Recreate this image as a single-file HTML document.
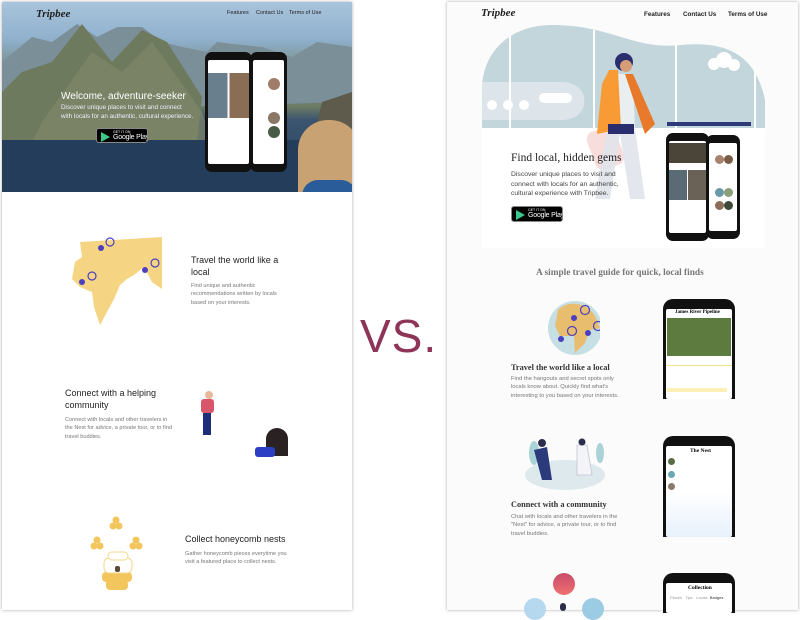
<!DOCTYPE html>
<html><head><meta charset="utf-8"><style>
*{margin:0;padding:0;box-sizing:border-box}
body{width:800px;height:612px;background:#fff;position:relative;overflow:hidden;font-family:"Liberation Sans",sans-serif}
.a{position:absolute}
.panel{box-shadow:0 0 3px rgba(0,0,0,.35)}
.ph{position:absolute;background:#111;border-radius:7px}
.ph i{position:absolute;left:3px;right:3px;top:8px;bottom:8px;background:#fff;border-radius:2px}
.gp{position:absolute;background:#000;border-radius:3px;border:1px solid #888;color:#fff;white-space:nowrap;overflow:hidden}
.gp b{position:absolute;left:4px;top:3px;width:0;height:0;border-left:9px solid #3bc88a;border-top:5px solid transparent;border-bottom:5px solid transparent}
.gp span{position:absolute;left:16px;top:1px;font-size:3.5px}
.gp em{position:absolute;left:16px;top:5px;font-size:7px;font-style:normal;letter-spacing:-.2px}
.serif{font-family:"Liberation Serif",serif}
.g{color:#777}
</style></head><body>

<!-- LEFT PANEL -->
<div class="a panel" style="left:2px;top:2px;width:350px;height:608px;background:#fff"></div>
<div class="a" style="left:2px;top:2px;width:350px;height:190px;overflow:hidden;background:linear-gradient(#a9c4dc 0%,#8fb0cc 20%,#7a8e86 35%,#6c7b64 55%,#3b5470 62%,#25405e 100%)">
 <svg class="a" style="left:0;top:0" width="350" height="190"><polygon points="0,60 30,35 50,40 75,22 95,35 115,25 140,25 160,40 180,45 205,50 215,40 230,42 260,45 290,55 315,40 350,45 350,100 0,110" fill="#7b8f99"/><polygon points="0,90 20,70 50,60 80,22 110,60 140,28 165,40 200,95 195,140 0,140" fill="#6e7a5e"/><polygon points="40,120 90,50 120,70 150,40 200,110 210,140 30,140" fill="#80886a" opacity=".7"/><rect y="138" width="350" height="52" fill="#233d5b"/><polygon points="320,100 350,90 350,190 300,190" fill="#5e5a4c"/></svg>
 <div class="a" style="left:296px;top:118px;width:62px;height:80px;border-radius:30px 30px 0 0;background:#c9a273"></div>
 <div class="a" style="left:300px;top:178px;width:55px;height:20px;border-radius:16px 16px 0 0;background:#2a5c9a"></div>
</div>
<div class="a" style="left:36px;top:8px;font:italic bold 11px 'Liberation Serif',serif;color:#222">Tripbee</div>
<div class="a" style="left:227px;top:10px;font-size:5.5px;color:#222">Features</div>
<div class="a" style="left:256px;top:10px;font-size:5.5px;color:#222">Contact Us</div>
<div class="a" style="left:289px;top:10px;font-size:5.5px;color:#222">Terms of Use</div>
<div class="a" style="left:61px;top:91px;font-size:10px;color:#fff">Welcome, adventure-seeker</div>
<div class="a" style="left:61px;top:104px;font-size:6.3px;line-height:8.5px;color:#eef">Discover unique places to visit and connect<br>with locals for an authentic, cultural experience.</div>
<div class="gp" style="left:96px;top:128px;width:52px;height:15px"><b></b><span>GET IT ON</span><em>Google Play</em></div>
<div class="ph" style="left:205px;top:52px;width:47px;height:120px"><i></i></div>
<div class="ph" style="left:250px;top:52px;width:37px;height:120px"><i></i></div>
<div class="a" style="left:208px;top:73px;width:41px;height:45px;background:linear-gradient(90deg,#6a7f8e 48%,#fff 48%,#fff 52%,#8a6d55 52%)"></div>
<div class="a" style="left:268px;top:78px;width:12px;height:12px;border-radius:50%;background:#a07d6a"></div>
<div class="a" style="left:268px;top:112px;width:12px;height:12px;border-radius:50%;background:#8a7766"></div>
<div class="a" style="left:268px;top:126px;width:12px;height:12px;border-radius:50%;background:#4a5a48"></div>

<svg class="a" style="left:72px;top:237px" width="92" height="88"><path d="M8,5 L90,0 L90,52 L80,45 L72,30 L62,38 L55,42 L48,48 L42,62 L35,75 L28,88 L22,70 L20,55 L8,50 L0,42 L3,25 L10,20 Z" fill="#f5d583"/><g fill="#4a3fbf"><circle cx="29" cy="11" r="3"/><circle cx="10" cy="45" r="3"/><circle cx="73" cy="33" r="3"/></g><g fill="none" stroke="#4a3fbf" stroke-width="1.2"><circle cx="38" cy="5" r="4"/><circle cx="20" cy="39" r="4"/><circle cx="83" cy="26" r="4"/></g></svg>
<div class="a" style="left:191px;top:254px;font-size:9px;line-height:12px;color:#222;width:100px">Travel the world like a local</div>
<div class="a g" style="left:191px;top:282px;font-size:5.6px;line-height:8.3px;width:100px">Find unique and authentic recommendations written by locals based on your interests.</div>

<div class="a" style="left:65px;top:387px;font-size:9px;line-height:12px;color:#222">Connect with a helping<br>community</div>
<div class="a g" style="left:65px;top:416px;font-size:5.6px;line-height:8.3px;width:110px">Connect with locals and other travelers in the Nest for advice, a private tour, or to find travel buddies.</div>
<div class="a" style="left:205px;top:391px;width:8px;height:8px;border-radius:50%;background:#e8b99a"></div>
<div class="a" style="left:201px;top:399px;width:13px;height:14px;background:#d9556a;border-radius:3px"></div>
<div class="a" style="left:203px;top:413px;width:8px;height:22px;background:#1d2d7a"></div>
<div class="a" style="left:266px;top:428px;width:22px;height:28px;border-radius:11px 11px 0 0;background:#2a2222"></div>
<div class="a" style="left:255px;top:447px;width:20px;height:10px;background:#2c3fc4;border-radius:3px"></div>

<svg class="a" style="left:90px;top:516px" width="55" height="76"><g fill="#f2c65c"><circle cx="26" cy="4" r="3.5"/><circle cx="23" cy="10" r="3.5"/><circle cx="29" cy="10" r="3.5"/><circle cx="7" cy="24" r="3.5"/><circle cx="4" cy="30" r="3.5"/><circle cx="10" cy="30" r="3.5"/><circle cx="46" cy="24" r="3.5"/><circle cx="43" cy="30" r="3.5"/><circle cx="49" cy="30" r="3.5"/><rect x="12" y="56" width="30" height="10" rx="4"/><rect x="16" y="64" width="22" height="10" rx="4"/></g><rect x="14" y="42" width="28" height="15" rx="5" fill="#fff" stroke="#f2d78c"/><rect x="18" y="36" width="20" height="8" rx="4" fill="#fff" stroke="#f2d78c"/><rect x="25" y="50" width="5" height="6" rx="2" fill="#5a4a3a"/></svg>
<div class="a" style="left:185px;top:534px;font-size:9px;color:#222">Collect honeycomb nests</div>
<div class="a g" style="left:185px;top:550px;font-size:5.6px;line-height:8.3px">Gather honeycomb pieces everytime you<br>visit a featured place to collect nests.</div>

<!-- VS -->
<div class="a" style="left:360px;top:309px;font-size:46px;color:#8e3457;letter-spacing:1px">VS.</div>

<!-- RIGHT PANEL -->
<div class="a panel" style="left:447px;top:2px;width:351px;height:608px;background:#fbfbfb"></div>
<div class="a" style="left:482px;top:128px;width:283px;height:120px;background:#fff"></div>
<svg class="a" style="left:482px;top:20px" width="284" height="110"><path d="M0,108 L0,70 C0,30 30,5 70,5 C130,5 150,30 200,25 C250,20 275,40 283,80 L283,108 Z" fill="#c3d6dc"/><path d="M0,62 L80,62 C110,62 110,100 80,100 L0,100Z" fill="#dde4ea"/><g fill="#fff"><circle cx="10" cy="85" r="5"/><circle cx="26" cy="85" r="5"/><circle cx="42" cy="85" r="5"/><rect x="57" y="73" width="33" height="10" rx="5"/><circle cx="232" cy="44" r="6"/><circle cx="242" cy="40" r="8"/><circle cx="252" cy="45" r="6"/><rect x="0" y="108" width="284" height="2"/></g><g fill="#fff"><rect x="27" y="15" width="2" height="95"/><rect x="111" y="10" width="2" height="100"/><rect x="193" y="22" width="2" height="88"/><rect x="272" y="45" width="2" height="65"/></g><rect x="185" y="102" width="84" height="4" fill="#2e3a7a"/></svg>
<svg class="a" style="left:565px;top:44px" width="115" height="160"><rect x="24" y="84" width="30" height="40" rx="8" fill="#f4c6c6" opacity=".6" transform="rotate(-20 40 100)"/><path d="M42,85 L30,155 L45,155 L55,90 L65,155 L80,155 L70,85Z" fill="#e0e3ea" opacity=".9"/><circle cx="59" cy="18" r="9" fill="#2b2e6e"/><circle cx="61" cy="22" r="6" fill="#d59e78"/><path d="M50,30 L68,30 L70,88 L42,88Z" fill="#e9eef0"/><path d="M44,26 L53,26 L56,85 L32,90 L37,40Z" fill="#f89b34"/><path d="M60,30 L68,30 L90,80 L80,90Z" fill="#e8782a"/><rect x="43" y="80" width="26" height="10" fill="#2b2e6e"/></svg>
<div class="a" style="left:481px;top:7px;font:italic bold 11px 'Liberation Serif',serif;color:#222">Tripbee</div>
<div class="a" style="left:644px;top:11px;font-size:6.3px;font-weight:bold;color:#222">Features</div>
<div class="a" style="left:683px;top:11px;font-size:6.3px;font-weight:bold;color:#222">Contact Us</div>
<div class="a" style="left:728px;top:11px;font-size:6.3px;font-weight:bold;color:#222">Terms of Use</div>
<div class="a serif" style="left:511px;top:152px;font-size:11.5px;color:#222">Find local, hidden gems</div>
<div class="a" style="left:511px;top:170px;font-size:6.8px;line-height:9.5px;color:#444">Discover unique places to visit and<br>connect with locals for an authentic,<br>cultural experience with Tripbee.</div>
<div class="gp" style="left:511px;top:206px;width:52px;height:16px"><b style="top:3px"></b><span>GET IT ON</span><em>Google Play</em></div>
<div class="ph" style="left:666px;top:133px;width:43px;height:108px"><i></i></div>
<div class="ph" style="left:706px;top:135px;width:34px;height:104px"><i></i></div>
<div class="a" style="left:669px;top:143px;width:37px;height:20px;background:#4b4438"></div>
<div class="a" style="left:669px;top:170px;width:37px;height:30px;background:linear-gradient(90deg,#5a6b76 48%,#fff 48%,#fff 52%,#6b6257 52%)"></div>
<div class="a" style="left:715px;top:155px;width:9px;height:9px;border-radius:50%;background:#a7826d"></div>
<div class="a" style="left:724px;top:155px;width:9px;height:9px;border-radius:50%;background:#7a5b48"></div>
<div class="a" style="left:715px;top:188px;width:9px;height:9px;border-radius:50%;background:#6a9aa8"></div>
<div class="a" style="left:724px;top:188px;width:9px;height:9px;border-radius:50%;background:#8b9f7a"></div>
<div class="a" style="left:715px;top:201px;width:9px;height:9px;border-radius:50%;background:#8a6d5a"></div>
<div class="a" style="left:724px;top:201px;width:9px;height:9px;border-radius:50%;background:#3d4a3a"></div>

<div class="a serif" style="left:536px;top:268px;font-size:9.3px;font-weight:bold;color:#777">A simple travel guide for quick, local finds</div>

<svg class="a" style="left:530px;top:298px" width="70" height="60"><circle cx="45" cy="30" r="27" fill="#c6dfe4"/><path d="M28,12 C40,0 60,6 66,20 L70,30 L60,32 L55,45 L45,55 L44,38 L30,38 L25,28 Z" fill="#e8bd6e"/><g fill="#4a3fbf"><circle cx="44" cy="20" r="3"/><circle cx="31" cy="41" r="3"/><circle cx="58" cy="35" r="3"/></g><g fill="none" stroke="#4a3fbf" stroke-width="1.2"><circle cx="55" cy="12" r="4.5"/><circle cx="42" cy="33" r="4.5"/><circle cx="68" cy="28" r="4.5"/></g></svg>
<div class="a serif" style="left:511px;top:363px;font-size:8.3px;font-weight:bold;color:#333">Travel the world like a local</div>
<div class="a g" style="left:511px;top:375px;font-size:5.8px;line-height:8.3px">Find the hangouts and secret spots only<br>locals know about. Quickly find what's<br>interesting to you based on your interests.</div>
<div class="ph" style="left:663px;top:299px;width:72px;height:100px;border-radius:10px 10px 0 0"><i style="top:10px;bottom:0"></i></div>
<div class="a" style="left:667px;top:318px;width:64px;height:38px;background:#5d7a3f"></div>
<div class="a serif" style="left:675px;top:310px;font-size:5px;font-weight:bold">James River Pipeline</div>
<div class="a" style="left:666px;top:365px;width:66px;height:1px;background:#f3e28a"></div>
<div class="a" style="left:667px;top:388px;width:60px;height:4px;background:#fbf0b8"></div>

<svg class="a" style="left:522px;top:435px" width="86" height="58"><ellipse cx="43" cy="40" rx="40" ry="15" fill="#dde9ec"/><ellipse cx="12" cy="18" rx="5" ry="12" fill="#a9d3d6"/><ellipse cx="78" cy="18" rx="4" ry="10" fill="#a9d3d6"/><path d="M12,15 L25,12 L30,45 L20,45Z" fill="#2b3a7a"/><circle cx="20" cy="8" r="4" fill="#2b2e4a"/><path d="M55,10 L65,10 L70,40 L55,40Z" fill="#f2f4f7" stroke="#ccd"/><circle cx="60" cy="7" r="3.5" fill="#2b2e4a"/></svg>
<div class="a serif" style="left:511px;top:500px;font-size:8.3px;font-weight:bold;color:#333">Connect with a community</div>
<div class="a g" style="left:511px;top:513px;font-size:5.8px;line-height:8.3px">Chat with locals and other travelers in the<br>"Nest" for advice, a private tour, or to find<br>travel buddies.</div>
<div class="ph" style="left:663px;top:436px;width:72px;height:101px;border-radius:10px 10px 0 0"><i style="top:10px;bottom:0;background:linear-gradient(#fff 50%,#e8f1fb)"></i></div>
<div class="a serif" style="left:690px;top:448px;font-size:5.5px;font-weight:bold">The Nest</div>
<div class="a" style="left:668px;top:458px;width:7px;height:7px;border-radius:50%;background:#5b6b45"></div>
<div class="a" style="left:668px;top:471px;width:7px;height:7px;border-radius:50%;background:#6aa8b5"></div>
<div class="a" style="left:668px;top:483px;width:7px;height:7px;border-radius:50%;background:#8a7a6a"></div>

<div class="a" style="left:553px;top:573px;width:22px;height:22px;border-radius:50%;background:linear-gradient(#c94b6a,#f07070)"></div>
<div class="a" style="left:524px;top:598px;width:22px;height:22px;border-radius:50%;background:#b5d8ee"></div>
<div class="a" style="left:582px;top:598px;width:22px;height:22px;border-radius:50%;background:#9ccbe4"></div>
<div class="a" style="left:560px;top:603px;width:6px;height:8px;border-radius:3px;background:#2b2e4a"></div>
<div class="ph" style="left:663px;top:573px;width:72px;height:40px;border-radius:10px 10px 0 0"><i style="top:10px;bottom:0"></i></div>
<div class="a serif" style="left:688px;top:585px;font-size:5.5px;font-weight:bold">Collection</div>
<div class="a" style="left:670px;top:595px;font-size:4px;color:#999">Places &nbsp; Tips &nbsp; Locals &nbsp;<span style="color:#333">Badges</span></div>
</body></html>
